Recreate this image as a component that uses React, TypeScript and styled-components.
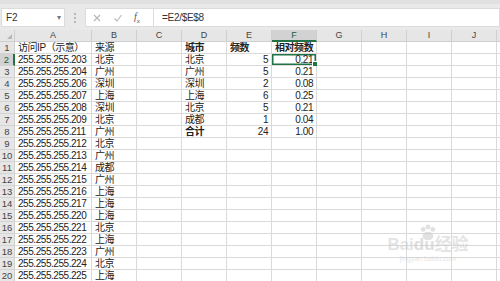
import styled, { createGlobalStyle } from "styled-components";

const GlobalStyle = createGlobalStyle`
  html, body { margin: 0; padding: 0; background: #ffffff; overflow: hidden; }
  body { font-family: "Liberation Sans", "Noto Sans CJK SC", sans-serif; }
`;

const green = "#217346";

const COLS = ["A", "B", "C", "D", "E", "F", "G", "H", "I", "J", ""];

const IPS = [203, 204, 206, 207, 208, 209, 211, 212, 213, 214, 215, 216, 217, 220, 221, 222, 223, 224, 225];
const SOURCES = ["北京", "广州", "深圳", "上海", "深圳", "北京", "广州", "北京", "广州", "成都", "广州", "上海", "上海", "上海", "北京", "上海", "广州", "北京", "上海"];

const SUMMARY = [
  { city: "城市", freq: "频数", rel: "相对频数", head: true },
  { city: "北京", freq: "5", rel: "0.21" },
  { city: "广州", freq: "5", rel: "0.21" },
  { city: "深圳", freq: "2", rel: "0.08" },
  { city: "上海", freq: "6", rel: "0.25" },
  { city: "北京", freq: "5", rel: "0.21" },
  { city: "成都", freq: "1", rel: "0.04" },
  { city: "合计", freq: "24", rel: "1.00", total: true },
];

type Cell = { text: string; align?: "left" | "right"; bold?: boolean };

function buildRow(r: number): Cell[] {
  const cells: Cell[] = COLS.map(() => ({ text: "" }));
  if (r === 0) {
    cells[0] = { text: "访问IP（示意）" };
    cells[1] = { text: "来源" };
  } else {
    cells[0] = { text: `255.255.255.${IPS[r - 1]}` };
    cells[1] = { text: SOURCES[r - 1] };
  }
  const s = SUMMARY[r];
  if (s) {
    const bold = !!s.head;
    cells[3] = { text: s.city, bold: bold || !!s.total };
    cells[4] = { text: s.freq, bold, align: bold ? "left" : "right" };
    cells[5] = { text: s.rel, bold, align: bold ? "left" : "right" };
  }
  return cells;
}

export default function App() {
  const rows = Array.from({ length: 20 }, (_, i) => buildRow(i));
  return (
    <>
      <GlobalStyle />
      <Screen>
        <Toolbar>
          <NameBox>
            <span>F2</span>
            <Caret>▾</Caret>
          </NameBox>
          <Grip>
            <i />
            <i />
            <i />
          </Grip>
          <FormulaTools>
            <ToolIcon viewBox="0 0 10 10">
              <path d="M2 2 L8 8 M8 2 L2 8" />
            </ToolIcon>
            <ToolIcon viewBox="0 0 10 10">
              <path d="M1.5 5.5 L4 8 L8.5 2" />
            </ToolIcon>
            <Fx>
              f<sub>x</sub>
            </Fx>
          </FormulaTools>
          <FormulaInput>=E2/$E$8</FormulaInput>
        </Toolbar>
        <Sheet>
          <Corner />
          {COLS.map((c, i) => (
            <ColHead key={i} $active={c === "F"}>
              {c}
            </ColHead>
          ))}
          {rows.map((cells, r) => (
            <Row key={r} cells={cells} index={r} />
          ))}
        </Sheet>
        <Watermark>
          <Paw viewBox="0 0 40 30">
            <circle cx="12" cy="9" r="4" />
            <circle cx="20" cy="5" r="4" />
            <circle cx="28" cy="9" r="4" />
            <ellipse cx="20" cy="20" rx="9" ry="7" />
          </Paw>
          <Brand>
            Bai<Du>du</Du>经验
          </Brand>
          <Url>jingyan.baidu.com</Url>
        </Watermark>
      </Screen>
    </>
  );
}

function Row({ cells, index }: { cells: Cell[]; index: number }) {
  return (
    <>
      <RowHead $active={index === 1}>{index + 1}</RowHead>
      {cells.map((c, i) => (
        <DataCell
          key={i}
          $align={c.align ?? "left"}
          $bold={!!c.bold}
          $selected={index === 1 && i === 5}
        >
          {c.text}
        </DataCell>
      ))}
    </>
  );
}

const Screen = styled.div`
  position: relative;
  width: 500px;
  height: 281px;
  overflow: hidden;
  background: #ffffff;
`;

const Toolbar = styled.div`
  height: 30px;
  box-sizing: border-box;
  padding: 4px 0 3px 1px;
  background: #e9e9e9;
  border-top: 4px solid #e1e1e1;
  display: flex;
  align-items: stretch;
`;

const NameBox = styled.div`
  width: 64px;
  box-sizing: border-box;
  background: #ffffff;
  border: 1px solid #dcdcdc;
  display: flex;
  align-items: center;
  justify-content: space-between;
  padding: 0 3px 0 4px;
  font-size: 10px;
  color: #333;
`;

const Caret = styled.span`
  font-size: 8px;
  color: #777;
`;

const Grip = styled.div`
  width: 20px;
  display: flex;
  flex-direction: column;
  align-items: center;
  justify-content: center;
  gap: 2px;
  i {
    width: 2px;
    height: 2px;
    background: #b8b8b8;
  }
`;

const FormulaTools = styled.div`
  width: 68px;
  box-sizing: border-box;
  background: #ffffff;
  border: 1px solid #dcdcdc;
  border-right: none;
  display: flex;
  align-items: center;
  padding-left: 6px;
  gap: 11px;
`;

const ToolIcon = styled.svg`
  width: 10px;
  height: 10px;
  fill: none;
  stroke: #b5b5b5;
  stroke-width: 1.1;
`;

const Fx = styled.span`
  font-family: "Liberation Serif", serif;
  font-style: italic;
  font-size: 10px;
  color: #555;
  sub {
    font-size: 7px;
  }
`;

const FormulaInput = styled.div`
  flex: 1;
  box-sizing: border-box;
  background: #ffffff;
  border: 1px solid #dcdcdc;
  display: flex;
  align-items: center;
  padding-left: 8px;
  font-size: 10px;
  letter-spacing: -0.3px;
  color: #333;
`;

const Sheet = styled.div`
  display: grid;
  grid-template-columns: 15px 77px repeat(10, 45px);
  grid-auto-rows: 12px;
  font-size: 10px;
  color: #222;
`;

const Corner = styled.div`
  position: relative;
  background: #e6e6e6;
  border-right: 1px solid #cfcfcf;
  border-bottom: 1px solid #cfcfcf;
  &::after {
    content: "";
    position: absolute;
    right: 2px;
    bottom: 2px;
    border-left: 5px solid transparent;
    border-bottom: 5px solid #b7b7b7;
  }
`;

const ColHead = styled.div<{ $active: boolean }>`
  box-sizing: border-box;
  background: ${(p) => (p.$active ? "#d2d2d2" : "#e6e6e6")};
  border-right: 1px solid #cfcfcf;
  border-bottom: ${(p) => (p.$active ? `2px solid ${green}` : "1px solid #cfcfcf")};
  color: ${(p) => (p.$active ? "#1f5f3a" : "#444")};
  text-align: center;
  line-height: 11px;
  font-size: 9px;
`;

const RowHead = styled.div<{ $active: boolean }>`
  box-sizing: border-box;
  background: ${(p) => (p.$active ? "#d2d2d2" : "#e6e6e6")};
  border-right: ${(p) => (p.$active ? `2px solid ${green}` : "1px solid #cfcfcf")};
  border-bottom: 1px solid #d4d4d4;
  color: ${(p) => (p.$active ? "#1f5f3a" : "#444")};
  text-align: center;
  line-height: 12px;
  font-size: 9.5px;
`;

const DataCell = styled.div<{ $align: string; $bold: boolean; $selected: boolean }>`
  position: relative;
  box-sizing: border-box;
  border-right: 1px solid #dadada;
  border-bottom: 1px solid #dadada;
  padding: 0 3px;
  line-height: 12px;
  letter-spacing: -0.45px;
  white-space: nowrap;
  overflow: visible;
  text-align: ${(p) => p.$align};
  font-weight: ${(p) => (p.$bold ? 700 : 400)};
  ${(p) =>
    p.$selected &&
    `
    box-shadow: inset 0 0 0 1.5px ${green};
    &::after {
      content: "";
      position: absolute;
      right: -2px;
      bottom: -2px;
      width: 4px;
      height: 4px;
      background: ${green};
      border: 1px solid #fff;
    }
  `}
`;

const Watermark = styled.div`
  position: absolute;
  left: 383px;
  top: 224px;
  width: 90px;
  display: flex;
  flex-direction: column;
  align-items: center;
  opacity: 0.55;
  pointer-events: none;
`;

const Paw = styled.svg`
  width: 26px;
  height: 18px;
  fill: #c9c9c9;
  margin-bottom: -6px;
`;

const Brand = styled.div`
  font-size: 17px;
  font-weight: 700;
  color: #cfcfcf;
  line-height: 18px;
`;

const Du = styled.span`
  color: #c4c4c4;
`;

const Url = styled.div`
  font-size: 7px;
  color: #cfcfcf;
  margin-top: 1px;
`;
